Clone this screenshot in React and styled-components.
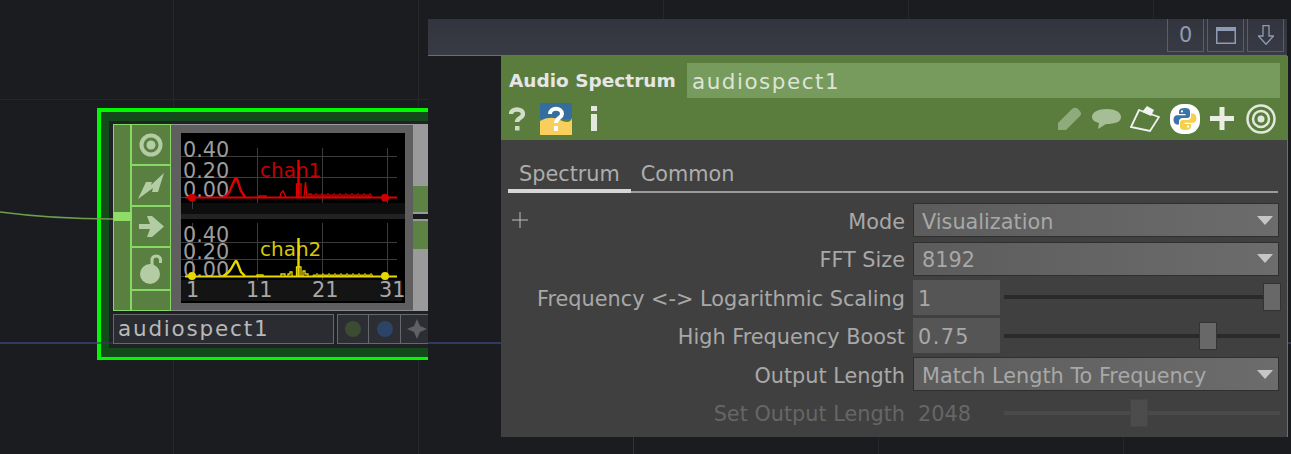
import React from 'react';
import styled, { createGlobalStyle } from 'styled-components';

const Global = createGlobalStyle`
  html, body { margin: 0; padding: 0; background: #1a1c20; }
  #root { width: 1291px; height: 454px; overflow: hidden; }
  * { box-sizing: border-box; }
`;

const Canvas = styled.div`
  position: relative;
  width: 1291px;
  height: 454px;
  overflow: hidden;
  font-family: "DejaVu Sans", sans-serif;
  background-color: #1a1c20;
`;

const Layer = styled.svg`
  position: absolute;
  left: 0;
  top: 0;
`;

/* node */
const Node = styled.div`
  position: absolute;
  left: 97px;
  top: 108px;
  width: 331px;
  height: 252px;
  overflow: hidden;
  border: 4px solid #00f900;
  border-right: none;
  border-bottom-width: 3px;
  background: #134a1a;
  padding: 9px 0 9px 8px;
`;

const NodeInner = styled.div`
  height: 100%;
  background: #1f2126;
  padding: 3px 0 0 4px;
`;

const NodeBody = styled.div`
  display: flex;
  height: 187px;
  width: 315px;
`;

const Strip = styled.div`
  width: 58px;
  flex: none;
  display: flex;
  border: 1px solid #86d962;
  background: #5a8041;
`;

const Tab = styled.div`
  width: 18px;
  display: flex;
  flex-direction: column;
  border-right: 2px solid #86d962;
`;

const TabPart = styled.div`
  flex: ${p => (p.$first ? '0 0 87px' : '1')};
`;

const TabLight = styled.div`
  height: 9px;
  background: #8fdc68;
  margin-right: -2px;
`;

const Flags = styled.div`
  flex: 1;
  display: flex;
  flex-direction: column;
`;

const Flag = styled.div`
  height: ${p => p.$h}px;
  display: flex;
  align-items: center;
  justify-content: center;
  border-bottom: 2px solid #86d962;
  &:last-child { border-bottom: none; }
`;

const Preview = styled.div`
  width: 242px;
  flex: none;
  background: #5f5f5f;
  border-top: 1px solid #9a9a9a;
  border-bottom: 1px solid #8a8a8a;
  padding: 8px 7px 7px 10px;
`;

const ChartSvg = styled.svg`
  display: block;
`;

const Side = styled.div`
  width: 15px;
  flex: none;
  background: #9a9a9a;
  padding-top: 62px;
`;

const SideBlock = styled.div`
  background: #5d8344;
  height: ${p => p.$h}px;
`;

const Sep = styled.div`
  height: 5px;
  margin: 2px 0;
  background: #18191c;
`;

const NameRow = styled.div`
  display: flex;
  margin-top: 3px;
  height: 30px;
  gap: 3px;
`;

const NameField = styled.div`
  width: 221px;
  flex: none;
  border: 1px solid #66686c;
  background: #2a2c31;
  color: #b9b9b9;
  font-size: 21.5px;
  letter-spacing: 1.8px;
  padding-left: 4px;
  line-height: 28px;
`;

const NameBtns = styled.div`
  display: flex;
  flex: none;
`;

const NameBtn = styled.div`
  width: 32px;
  flex: none;
  border: 1px solid #66686c;
  border-left-width: ${p => (p.$first ? 1 : 0)}px;
  background: #2c2e33;
  display: flex;
  align-items: center;
  justify-content: center;
`;

const Dot = styled.span`
  width: 16px;
  height: 16px;
  border-radius: 50%;
  background: ${p => p.$c};
`;

/* floating header */
const TopBar = styled.div`
  position: absolute;
  left: 428px;
  top: 19px;
  width: 859px;
  height: 37px;
  background: linear-gradient(#32353e, #383b45);
  border-bottom: 1px solid #6a6d74;
  display: flex;
  justify-content: flex-end;
  gap: 3px;
  padding-right: 3px;
`;

const TopBtn = styled.div`
  width: 37px;
  height: 33px;
  border: 1px solid #5a5e66;
  border-top: none;
  display: flex;
  align-items: center;
  justify-content: center;
  color: #8f9bb3;
  font-size: 20.8px;
`;

/* parameter panel */
const Panel = styled.div`
  position: absolute;
  left: 501px;
  top: 56px;
  width: 787px;
  height: 381px;
  background: #404040;
  border-right: 1px solid #6f6f6f;
  color: #a8a8a8;
`;

const Head = styled.div`
  height: 84px;
  background: #5a7d3e;
  padding: 7px 7px 0 8px;
`;

const HeadRow = styled.div`
  display: flex;
  align-items: center;
  height: 35px;
`;

const Title = styled.div`
  width: 178px;
  color: #e6e6e6;
  font-size: 18.5px;
  font-weight: bold;
  white-space: nowrap;
`;

const NameInput = styled.div`
  flex: 1;
  height: 35px;
  background: #779b5d;
  color: #dde4d6;
  font-size: 21.5px;
  letter-spacing: 1.5px;
  line-height: 38px;
  padding-left: 5px;
`;

const IconRow = styled.div`
  display: flex;
  align-items: center;
  justify-content: space-between;
  height: 37px;
  margin-top: 2px;
  padding-right: 4px;
`;

const IconGroup = styled.div`
  display: flex;
  align-items: center;
`;

const Glyph = styled.svg`
  flex: none;
  margin-left: ${p => p.$ml || 0}px;
`;

const Tabs = styled.div`
  display: flex;
  margin: 16px 9px 0 7px;
  height: 37px;
  border-bottom: 2px solid #9a9a9a;
  font-size: 20.8px;
`;

const TabItem = styled.div`
  padding: 0 ${p => (p.$active ? 11 : 10)}px;
  line-height: 37px;
  color: #adadad;
  height: 37px;
  border-bottom: 4px solid ${p => (p.$active ? '#d6d6d6' : 'transparent')};
`;

const Params = styled.div`
  position: relative;
  display: flex;
  flex-direction: column;
  padding-top: 8px;
`;

const PlusMark = styled.svg`
  position: absolute;
  left: 11px;
  top: 19px;
`;

const Row = styled.div`
  display: flex;
  height: 38.5px;
  align-items: center;
  color: ${p => (p.$off ? '#666' : '#a8a8a8')};
  font-size: 20.8px;
`;

const Label = styled.div`
  width: 404px;
  padding-top: 3px;
  text-align: right;
  white-space: nowrap;
`;

const Menu = styled.div`
  width: 366px;
  height: 34px;
  margin-left: 8px;
  background: linear-gradient(90deg, #5c5c5c, #6c6c6c);
  border: 1px solid #2f2f2f;
  display: flex;
  align-items: center;
  justify-content: space-between;
  padding: 3px 5px 0 8px;
`;

const Arrow = styled.span`
  width: 0;
  height: 0;
  margin-top: -3px;
  border-left: 8px solid transparent;
  border-right: 8px solid transparent;
  border-top: 9px solid #c6c6c6;
`;

const Value = styled.div`
  width: 87px;
  height: 35px;
  margin-left: 8px;
  background: ${p => (p.$off ? 'transparent' : '#555')};
  line-height: 38px;
  padding-left: 5px;
  letter-spacing: ${p => p.$sp || 0}px;
`;

const Slider = styled.div`
  position: relative;
  width: 276px;
  height: 4px;
  margin-left: 4px;
  background: ${p => (p.$off ? '#4a4a4a' : '#2a2a2a')};
`;

const Handle = styled.div`
  position: absolute;
  top: -12px;
  left: ${p => p.$at}px;
  width: 18px;
  height: 28px;
  background: ${p => (p.$off ? '#4c4c4c' : '#686868')};
  border: 1px solid ${p => (p.$off ? '#454545' : '#333')};
`;

const greenIcon = '#b3cca4';

// rectangular pulses along the floor of a trace
const comb = (x0, x1, floor, seed, top) => {
  let d = `M${x0} ${floor}`;
  for (let x = x0, i = 0; x < x1; x += 3, i++) {
    const h = top + ((i * seed) % 2);
    d += ` V${floor - h} H${x + 2} V${floor} H${x + 3}`;
  }
  return d;
};

const Chart = () => (
  <ChartSvg width="224" height="170" viewBox="0 0 224 170">
    <rect width="224" height="170" fill="#000" />
    <rect y="70" width="224" height="11" fill="#0d0d0d" />
    <rect y="81" width="224" height="5" fill="#222" />
    <rect y="147" width="221" height="21" fill="#141414" />
    <g stroke="#3c3c3c" strokeWidth="1" fill="none">
      <path d="M0 23.500 H216 M0 44.500 H216 M0 64.500 H216" />
      <path d="M0 109.500 H216 M0 126.500 H216 M0 143.500 H216" />
      <path d="M76.500 15 V70 M141.500 15 V70 M206.500 15 V70 M11.500 60 V76" />
      <path d="M76.500 90 V147 M141.500 90 V147 M206.500 90 V147 M11.500 90 V147" />
    </g>
    <g fontFamily="DejaVu Sans, sans-serif" fontSize="20.800" fill="#9c9c9c">
      <text x="2" y="24">0.40</text>
      <text x="2" y="45">0.20</text>
      <text x="2" y="64">0.00</text>
      <text x="2" y="109">0.40</text>
      <text x="2" y="126">0.20</text>
      <text x="2" y="144">0.00</text>
    </g>
    <text x="79" y="44" fontFamily="DejaVu Sans, sans-serif" fontSize="20" fill="#c40000">chan1</text>
    <text x="79" y="123" fontFamily="DejaVu Sans, sans-serif" fontSize="20" fill="#d8c800">chan2</text>

    <g stroke="#e00000" fill="none">
      <path d="M4 64.500 H216" strokeWidth="1.800" />
      <path d="M42 64 Q48 62 50 55 L54 46 Q55 44 56 46 L60 58 L64 64" strokeWidth="2.400" />
      <path d="M78 64 V63 H85 V64 M99 64 L100 60 L102 58 L104 62 L105 64" strokeWidth="1.400" />
      <path d="M115.500 64 V51 H120 V64 M123 64 L124.500 49 L126 64 M128 64 V61 H130 V64" strokeWidth="1.300" />
      <path d="M117.500 64 V27" strokeWidth="2.400" />
      <path d={comb(131, 190, 64, 1, 2)} strokeWidth="1" />
    </g>
    <g stroke="#e6d800" fill="none">
      <path d="M4 143.500 H216" strokeWidth="1.800" />
      <path d="M42 143 Q47 141 50 136 L54 129 Q55 127 56 129 L60 139 L64 143" strokeWidth="2.400" />
      <path d="M76 143 V142 H82 V143 M100 143 V141 H104 V143 M107 143 V141 H109 V139 H111 V143" strokeWidth="1.300" />
      <path d="M115.500 143 V134 H120 V143 M122 143 V138 H124 V141 H127 V143" strokeWidth="1.300" />
      <path d="M117.500 143 V105" strokeWidth="2.400" />
      <path d={comb(132, 190, 143, 3, 1)} strokeWidth="1" />
    </g>
    <circle cx="11" cy="64.700" r="4" fill="#cc0000" />
    <circle cx="204" cy="64.700" r="4" fill="#cc0000" />
    <circle cx="11" cy="143" r="4" fill="#e6d800" />
    <circle cx="204" cy="143" r="4" fill="#e6d800" />
    <g fontFamily="DejaVu Sans, sans-serif" fontSize="20.800" fill="#a8a8a8">
      <text x="5" y="164">1</text>
      <text x="65" y="164">11</text>
      <text x="131" y="164">21</text>
      <text x="198" y="164">31</text>
    </g>
  </ChartSvg>
);

const Python = () => (
  <Glyph $ml={10} width="30" height="30" viewBox="0 0 30 30">
    <rect width="30" height="30" rx="13" fill="#fff" />
    <path d="M15 4c-4 0-6 1-6 3.500V10h6.500v1.200H7C5 11.200 3.500 13 3.500 15.500S5 20.500 7 20.500h2v-3c0-2 1.500-3.500 3.500-3.500h5c1.500 0 2.500-1 2.500-2.500V7.500C20 5 18.500 4 15 4z" fill="#3b74a8" />
    <path d="M15 26c4 0 6-1 6-3.500V20h-6.500v-1.200H23c2 0 3.500-1.800 3.500-4.300S25 9.500 23 9.500h-2v3c0 2-1.500 3.500-3.500 3.500h-5C11 16 10 17 10 18.500v4C10 25 11.500 26 15 26z" fill="#f6cf4f" />
    <circle cx="12" cy="7.400" r="1.100" fill="#fff" />
    <circle cx="18" cy="22.600" r="1.100" fill="#fff" />
  </Glyph>
);

export default function App() {
  return (
    <Canvas>
      <Global />
      <Layer width="1291" height="454">
        <g stroke="#25272c" strokeWidth="1">
          <path d="M173.500 0 V454 M418.500 0 V454 M878.500 437 V454 M1123.500 437 V454 M663.500 0 V19 M908.500 0 V19 M1153.500 0 V19" />
          <path d="M0 99.500 H428" />
        </g>
        <path d="M633.500 437 V454" stroke="#2f3050" strokeWidth="1" />
        <path d="M0 343 H1291" stroke="#35385f" strokeWidth="2" />
      </Layer>

      <Node>
        <NodeInner>
          <NodeBody>
            <Strip>
              <Tab>
                <TabPart $first />
                <TabLight />
                <TabPart />
              </Tab>
              <Flags>
                <Flag $h={41}>
                  <svg width="24" height="24" viewBox="0 0 24 24" fill="none">
                    <circle cx="12" cy="12" r="9.500" stroke={greenIcon} strokeWidth="4" />
                    <circle cx="12" cy="12" r="4.500" fill={greenIcon} />
                  </svg>
                </Flag>
                <Flag $h={41}>
                  <svg width="26" height="26" viewBox="0 0 26 26"><path d="M0 26 L8 9 H14 L13 12 L26 0 L20 19 H14 L15 15 Z" fill={greenIcon} /></svg>
                </Flag>
                <Flag $h={41}>
                  <svg width="25" height="21" viewBox="0 0 25 21"><path d="M0 8 H11 L8 0 H13 L25 10.500 L13 21 H8 L11 13 H0 Z" fill={greenIcon} /></svg>
                </Flag>
                <Flag $h={43}>
                  <svg width="22" height="33" viewBox="0 0 22 33" fill="none">
                    <circle cx="10" cy="22" r="10" fill={greenIcon} />
                    <path d="M12 14 V7 A4.500 4.500 0 0 1 20.500 7 V11" stroke={greenIcon} strokeWidth="3" />
                  </svg>
                </Flag>
                <Flag $h={19} />
              </Flags>
            </Strip>
            <Preview>
              <Chart />
            </Preview>
            <Side>
              <SideBlock $h={26} />
              <Sep />
              <SideBlock $h={28} />
            </Side>
          </NodeBody>
          <NameRow>
            <NameField>audiospect1</NameField>
            <NameBtns>
              <NameBtn $first><Dot $c="#3c4c33" /></NameBtn>
              <NameBtn><Dot $c="#2b4468" /></NameBtn>
              <NameBtn>
                <svg width="22" height="22" viewBox="0 0 22 22"><path d="M11 1 L14 8 L21 11 L14 14 L11 21 L8 14 L1 11 L8 8 Z" fill="#5e6066" /></svg>
              </NameBtn>
            </NameBtns>
          </NameRow>
        </NodeInner>
      </Node>

      <Layer width="1291" height="454">
        <path d="M0 212 C30 216 60 219 113 219" stroke="#6f9f4e" strokeWidth="1.500" fill="none" />
        <path d="M97 343 H113" stroke="#35385f" strokeWidth="2" opacity="0.6" />
      </Layer>

      <TopBar>
        <TopBtn>0</TopBtn>
        <TopBtn>
          <svg width="20" height="17" viewBox="0 0 20 17" fill="none"><rect x="0.750" y="0.750" width="18.500" height="15.500" stroke="#8f9bb3" strokeWidth="1.500" /><rect width="20" height="4" fill="#8f9bb3" /></svg>
        </TopBtn>
        <TopBtn>
          <svg width="16" height="20" viewBox="0 0 16 20" fill="none"><path d="M5 0.700 H11 V11 H15.500 L8 19.300 L0.500 11 H5 Z" stroke="#8f9bb3" strokeWidth="1.300" /></svg>
        </TopBtn>
      </TopBar>

      <Panel>
        <Head>
          <HeadRow>
            <Title>Audio Spectrum</Title>
            <NameInput>audiospect1</NameInput>
          </HeadRow>
          <IconRow>
            <IconGroup>
              <Glyph width="16" height="24" viewBox="0 0 16 24" fill="none">
                <path d="M2 7 C2 1 14 1 14 7 C14 11 8 11 8 15" stroke="#d0dcc6" strokeWidth="4.500" />
                <rect x="6" y="19" width="4.500" height="4.500" fill="#d0dcc6" />
              </Glyph>
              <Glyph $ml={15} width="32" height="32" viewBox="0 0 32 32">
                <rect width="32" height="16" fill="#356e9e" />
                <path d="M0 32 V18 Q10 12 20 17 T32 15 V32 Z" fill="#f8cf5c" />
                <path d="M10 11 C10 4 22 4 22 11 C22 15 16 15 16 20" stroke="#fff" strokeWidth="4" fill="none" />
                <rect x="14" y="23" width="4" height="5" fill="#fff" />
              </Glyph>
              <Glyph $ml={18} width="8" height="25" viewBox="0 0 8 25">
                <rect x="1" y="0" width="6" height="5" fill="#e2e9dc" />
                <rect x="1" y="8" width="6" height="17" fill="#e2e9dc" />
              </Glyph>
            </IconGroup>
            <IconGroup>
              <Glyph width="24" height="23" viewBox="0 0 24 23"><path d="M0 23 V16 L14 2 Q16 0 19 1 L22 4 Q24 7 22 9 L8 23 Z" fill="#8eab7b" /></Glyph>
              <Glyph $ml={10} width="29" height="20" viewBox="0 0 29 20"><path d="M15 0 C23 0 29 3 29 8 C29 13 23 15 14 15 L6 20 L7 14 C3 13 0 11 0 8 C0 3 6 0 15 0 Z" fill="#a5be95" /></Glyph>
              <Glyph $ml={9} width="30" height="26" viewBox="0 0 30 26" fill="none">
                <path d="M9 4 L1 21 L20 25 L29 11 Z" stroke="#f2f2f2" strokeWidth="1.800" />
                <path d="M12 6 L17 0 L24 4 L21 10 Z" fill="#f2f2f2" />
              </Glyph>
              <Python />
              <Glyph $ml={10} width="24" height="23" viewBox="0 0 24 23"><path d="M9.500 0 H14.500 V9 H24 V14 H14.500 V23 H9.500 V14 H0 V9 H9.500 Z" fill="#e8efe2" /></Glyph>
              <Glyph $ml={12} width="30" height="30" viewBox="0 0 30 30" fill="none">
                <circle cx="15" cy="15" r="13.500" stroke="#e2e9dc" strokeWidth="2.500" />
                <circle cx="15" cy="15" r="8" stroke="#e2e9dc" strokeWidth="2.500" />
                <circle cx="15" cy="15" r="3.500" fill="#e2e9dc" />
              </Glyph>
            </IconGroup>
          </IconRow>
        </Head>
        <Tabs>
          <TabItem $active>Spectrum</TabItem>
          <TabItem>Common</TabItem>
        </Tabs>
        <Params>
          <PlusMark width="16" height="16" viewBox="0 0 16 16"><path d="M8 0 V16 M0 8 H16" stroke="#bdbdbd" strokeWidth="1" /></PlusMark>
          <Row>
            <Label>Mode</Label>
            <Menu>Visualization<Arrow /></Menu>
          </Row>
          <Row>
            <Label>FFT Size</Label>
            <Menu>8192<Arrow /></Menu>
          </Row>
          <Row>
            <Label>Frequency &lt;-&gt; Logarithmic Scaling</Label>
            <Value>1</Value>
            <Slider><Handle $at={259} /></Slider>
          </Row>
          <Row>
            <Label>High Frequency Boost</Label>
            <Value $sp={1.4}>0.75</Value>
            <Slider><Handle $at={195} /></Slider>
          </Row>
          <Row>
            <Label>Output Length</Label>
            <Menu>Match Length To Frequency<Arrow /></Menu>
          </Row>
          <Row $off>
            <Label>Set Output Length</Label>
            <Value $off>2048</Value>
            <Slider $off><Handle $off $at={126} /></Slider>
          </Row>
        </Params>
      </Panel>
    </Canvas>
  );
}
